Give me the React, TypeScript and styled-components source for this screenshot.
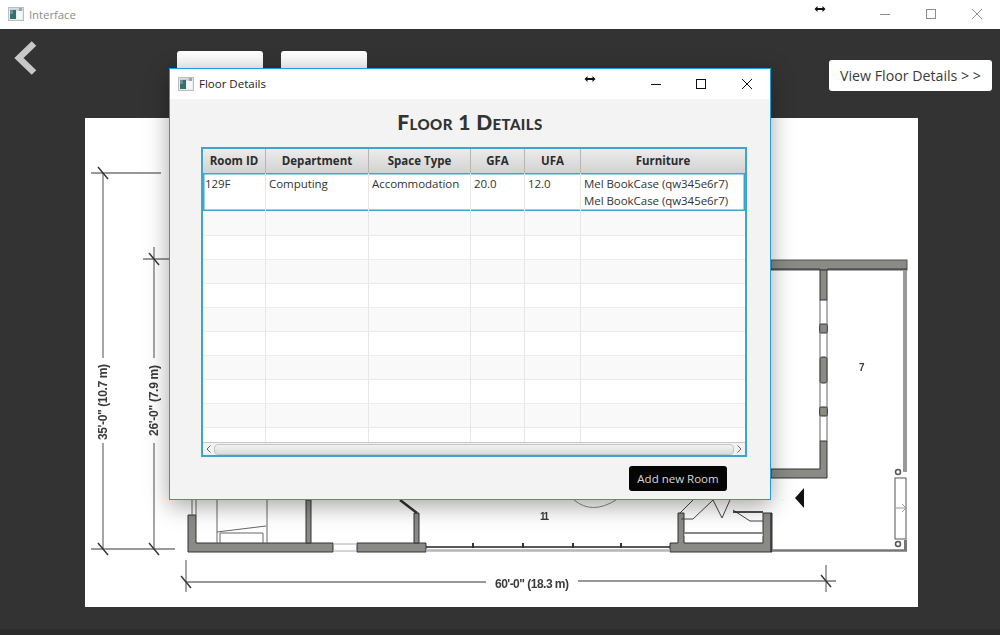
import * as React from "react";
import styled, { createGlobalStyle } from "styled-components";

const UI_FONT = `"Open Sans", "Noto Sans", "Liberation Sans", sans-serif`;
const COLUMNS = "63px 103px 102px 54px 56px 1fr";
const EMPTY_ROWS = 10;

const GlobalStyle = createGlobalStyle`
  html, body {
    margin: 0;
    padding: 0;
    background: #333;
  }
  body {
    font-family: ${UI_FONT};
  }
`;

const Page = styled.div`
  position: relative;
  width: 1000px;
  height: 635px;
  overflow: hidden;
  display: flex;
  flex-direction: column;
  background: #333333;
`;

const TitleBar = styled.div`
  height: 29px;
  flex: none;
  display: flex;
  align-items: center;
  background: #fff;
  padding: 0 0 1px 8px;
  box-sizing: border-box;
  font-size: 11.5px;
  color: #8c8c8c;
`;

const AppName = styled.span`
  margin-left: 5px;
  letter-spacing: -0.1px;
`;

const WindowControls = styled.div`
  margin-left: auto;
  display: flex;
  align-items: center;
`;

const ControlButton = styled.div<{ $w: number }>`
  width: ${(p) => p.$w}px;
  display: flex;
  justify-content: center;
`;

const ResizeCursor = styled.svg<{ $right: number }>`
  position: absolute;
  right: ${(p) => p.$right}px;
  top: 5px;
`;

const TopRow = styled.div`
  height: 89px;
  flex: none;
  display: flex;
  align-items: flex-start;
  padding: 0 8px 0 14px;
`;

const BackArrow = styled.svg`
  margin-top: 12px;
  flex: none;
`;

const FloorButton = styled.div`
  width: 86px;
  height: 31px;
  margin: 22px 18px 0 0;
  border-radius: 3px;
  background: linear-gradient(#ffffff, #ededed);
  &:first-of-type {
    margin-left: 140px;
  }
`;

const ViewButton = styled.button`
  margin: 31px 0 0 auto;
  width: 163px;
  height: 31px;
  border: 0;
  border-radius: 3px;
  background: #fff;
  color: #3a3a3a;
  font-family: ${UI_FONT};
  font-size: 14.2px;
  padding: 0;
  white-space: nowrap;
`;

const PlanSheet = styled.div`
  width: 833px;
  height: 489px;
  margin-left: 85px;
  flex: none;
  background: #fff;
  overflow: hidden;
  svg {
    filter: blur(0.55px);
  }
`;

const Footer = styled.div`
  flex: 1;
  border-bottom: 6px solid #2b2b2b;
`;

const Dialog = styled.div`
  position: absolute;
  left: 169px;
  top: 68px;
  width: 602px;
  height: 432px;
  box-sizing: border-box;
  border: 1px solid #1f9bd6;
  background: #f3f3f3;
  box-shadow: 0 6px 22px rgba(0, 0, 0, 0.35);
  display: flex;
  flex-direction: column;
`;

const DialogBar = styled.div`
  height: 30px;
  flex: none;
  display: flex;
  align-items: center;
  background: #fff;
  padding: 0 0 1px 8px;
  box-sizing: border-box;
  font-size: 11.5px;
  color: #222;
`;

const DialogName = styled.span`
  margin-left: 5px;
`;

const Heading = styled.h1`
  margin: 6px 0 0;
  height: 42px;
  line-height: 34px;
  text-align: center;
  font-family: Lato, "Liberation Sans", sans-serif;
  font-size: 21px;
  font-weight: 900;
  font-variant: small-caps;
  letter-spacing: 0.4px;
  color: #333;
`;

const TableFrame = styled.div`
  width: 546px;
  height: 310px;
  margin-left: 31px;
  box-sizing: border-box;
  border: 2px solid #3ba7cf;
  background: #fff;
  display: flex;
  flex-direction: column;
  flex: none;
  overflow: hidden;
`;

const HeaderRow = styled.div`
  display: grid;
  grid-template-columns: ${COLUMNS};
  height: 24px;
  flex: none;
  background: linear-gradient(#ececec, #d2d2d2);
`;

const HeaderCell = styled.div`
  border-right: 1px solid #b5b5b5;
  box-sizing: border-box;
  text-align: center;
  line-height: 23px;
  font-size: 11.5px;
  font-weight: 700;
  color: #2c2c2c;
  white-space: nowrap;
  &:last-child {
    border-right: 0;
  }
`;

const Rows = styled.div`
  flex: 1;
  min-height: 0;
  overflow: hidden;
`;

const Row = styled.div<{ $selected?: boolean; $odd?: boolean }>`
  display: grid;
  grid-template-columns: ${COLUMNS};
  height: ${(p) => (p.$selected ? 38 : 24)}px;
  margin-bottom: ${(p) => (p.$selected ? 1 : 0)}px;
  box-sizing: border-box;
  background: ${(p) => (p.$odd ? "#f9f9f9" : "#fff")};
  border-bottom: ${(p) => (p.$selected ? "0" : "1px solid #ececec")};
  box-shadow: ${(p) => (p.$selected ? "inset 0 0 0 1.5px #3ba7cf" : "none")};
`;

const Cell = styled.div`
  border-right: 1px solid #e6e6e6;
  box-sizing: border-box;
  padding: 2px 0 0 3px;
  font-size: 11.5px;
  letter-spacing: -0.05px;
  line-height: 17px;
  color: #333;
  white-space: nowrap;
  &:first-child {
    padding-left: 2px;
  }
  &:last-child {
    border-right: 0;
  }
`;

const ScrollBar = styled.div`
  height: 12px;
  flex: none;
  display: flex;
  align-items: center;
  background: #f2f2f2;
  border-top: 1px solid #c8c8c8;
`;

const ScrollTrack = styled.div`
  flex: 1;
  height: 9px;
  border: 1px solid #c4c4c4;
  border-radius: 4px;
  background: linear-gradient(#f2f2f2, #dcdcdc);
`;

const ScrollArrow = styled.svg`
  flex: none;
  margin: 0 3px;
`;

const DialogFooter = styled.div`
  display: flex;
  justify-content: flex-end;
  padding: 9px 43px 0 0;
`;

const AddButton = styled.button`
  width: 98px;
  height: 25px;
  padding: 0;
  border: 0;
  border-radius: 3px;
  background: #050505;
  color: #d8d8d8;
  font-family: ${UI_FONT};
  font-size: 11.5px;
`;

const AppIcon = () => (
  <svg width="16" height="16" viewBox="0 0 16 16">
    <rect x="0.5" y="1.5" width="15" height="13" fill="#e9eeee" stroke="#b9bdbd" />
    <rect x="1.5" y="2.5" width="13" height="2" fill="#c7d0d2" />
    <rect x="2" y="4" width="6" height="9" fill="#33706f" />
    <rect x="2" y="4" width="3" height="4" fill="#6c8fa0" />
    <rect x="9" y="5" width="5" height="8" fill="#f6f6f6" />
    <rect x="11" y="2" width="3" height="3" fill="#9aa7aa" />
  </svg>
);

const Cursor = ({ right, top }: { right: number; top?: number }) => (
  <ResizeCursor $right={right} width="12" height="8" viewBox="0 0 12 8" style={top ? { top } : undefined}>
    <path d="M0.5 4 L3.5 1 V3 H8.5 V1 L11.5 4 L8.5 7 V5 H3.5 V7 Z" fill="#111" />
  </ResizeCursor>
);

const Controls = ({ color, widths }: { color: string; widths: number[] }) => (
  <WindowControls>
    <ControlButton $w={widths[0]}>
      <svg width="12" height="12" viewBox="0 0 12 12">
        <path d="M1 6.5 H11" stroke={color} strokeWidth="1" />
      </svg>
    </ControlButton>
    <ControlButton $w={widths[1]}>
      <svg width="12" height="12" viewBox="0 0 12 12">
        <rect x="1.5" y="1.5" width="9" height="9" fill="none" stroke={color} />
      </svg>
    </ControlButton>
    <ControlButton $w={widths[2]}>
      <svg width="12" height="12" viewBox="0 0 12 12">
        <path d="M1 1 L11 11 M11 1 L1 11" stroke={color} strokeWidth="1" fill="none" />
      </svg>
    </ControlButton>
  </WindowControls>
);

const Tick = ({ x, y }: { x: number; y: number }) => (
  <path d={`M${x - 5} ${y - 6} L${x + 5} ${y + 6}`} stroke="#333" strokeWidth="1.4" />
);

const FloorPlan = () => {
  const wall = "#8a8a86";
  const edge = "#333";
  const dim = "#777";
  return (
    <svg width="833" height="489" viewBox="85 118 833 489">
      {/* dimensions, left */}
      <g stroke={dim} strokeWidth="1.3" fill="none">
        <path d="M91 173 H161 M103 173 V358 M103 443 V549" />
        <path d="M143 259 H170 M154 247 V358 M154 443 V549" />
        <path d="M91 549 H175" />
        <path d="M186 560 V592 M186 582 H486 M578 581 H836 M826 565 V592" />
      </g>
      <Tick x={103} y={173} />
      <Tick x={154} y={259} />
      <Tick x={103} y={549} />
      <Tick x={154} y={549} />
      <Tick x={186} y={582} />
      <Tick x={826} y={581} />
      <g fill="#3a3a3a" fontFamily="Liberation Sans Narrow, Liberation Sans, sans-serif" fontSize="12" fontWeight="700">
        <text transform="translate(107 440) rotate(-90)" textLength="76">35'-0" (10.7 m)</text>
        <text transform="translate(158 436) rotate(-90)" textLength="71">26'-0" (7.9 m)</text>
        <text x="495" y="588" textLength="74">60'-0" (18.3 m)</text>
        <text x="540" y="520" fontSize="10" letterSpacing="-1.5">11</text>
        <text x="859" y="371" fontSize="10">7</text>
      </g>

      {/* bottom walls */}
      <g fill={wall} stroke={edge} strokeWidth="1">
        <path d="M188 515 H196 V543 H333 V552 H188 Z" />
        <path d="M306 500 H311 V543 H306 Z" />
        <path d="M357 543 H426 V552 H357 Z" />
        <path d="M414 513 H419 V543 H414 Z" />
        <path d="M670 543 H678 V513 H684 V543 H763 V513 H772 V552 H670 Z" />
      </g>
      <g stroke="#666" fill="none" strokeWidth="1">
        <path d="M192 500 V515 M196 500 V515" />
        <path d="M217 500 V543 M267 500 V543 M217 532 L266 526 M220 543 V533 H263 V543" />
        <path d="M333 544 H357 M333 551 H357" stroke="#aaa" />
        <path d="M574 500 Q592 515 616 500" stroke="#888" />
      </g>
      <path d="M400 500 L417 513" stroke={edge} strokeWidth="2.5" />
      <path d="M426 547 H670" stroke="#222" strokeWidth="1.5" />
      <path d="M426 550.5 H670" stroke="#b5b5b5" strokeWidth="2.5" />
      <path d="M473 543 V548 M523 543 V548 M573 543 V548 M621 543 V548" stroke="#333" strokeWidth="2" />

      {/* stairs */}
      <g stroke="#444" strokeWidth="1" fill="none">
        <path d="M680 513 L693 500 M681 519 H693 L713 500 L722 518 L730 500" />
        <path d="M733 510 L750 521 H763" />
        <path d="M733 512 H763" strokeWidth="1.6" stroke="#222" />
        <path d="M684 533 H763" stroke="#888" strokeWidth="2" />
        <path d="M684 535 H763" stroke="#fff" strokeDasharray="10 5" />
      </g>
      <path d="M771 513 V552" stroke="#333" strokeWidth="1.5" />

      {/* right wing */}
      <rect x="771" y="260" width="136" height="10" fill={wall} stroke="#555" strokeWidth="1" />
      <path d="M771 269 H820 M827 269 H907" stroke={edge} strokeWidth="1" />
      <path d="M903 270 H907 V472 H903 Z" fill="#9a9a98" />
      <g fill={wall} stroke={edge} strokeWidth="1">
        <rect x="820" y="270" width="7" height="30" />
        <rect x="819.5" y="324" width="8" height="9" rx="1.5" />
        <rect x="820" y="357" width="7" height="26" rx="2" />
        <rect x="819.5" y="407" width="8" height="9" rx="1.5" />
        <path d="M820 441 H827 V478 H771 V469 H820 Z" />
      </g>
      <path d="M820 300 V441 M827 300 V441" stroke="#666" strokeWidth="1" />
      <path d="M795 498 L804 488 V508 Z" fill="#111" />
      <g fill="none" stroke="#555" strokeWidth="1">
        <rect x="895" y="478" width="11" height="61" />
        <circle cx="898" cy="472" r="2.5" strokeWidth="1.5" />
        <circle cx="898" cy="544" r="2.5" strokeWidth="1.5" />
        <path d="M896 508 H906 M902 504 L906 508 L902 512" stroke="#999" />
      </g>
      <path d="M772 550.5 H907" stroke="#777" strokeWidth="2.5" />
      <path d="M905.5 540 V550" stroke="#777" strokeWidth="3" />
    </svg>
  );
};

const HEADERS = ["Room ID", "Department", "Space Type", "GFA", "UFA", "Furniture"];

export default function App() {
  return (
    <Page>
      <GlobalStyle />
      <TitleBar>
        <AppIcon />
        <AppName>Interface</AppName>
        <Controls color="#8e8e8e" widths={[46, 46, 46]} />
      </TitleBar>
      <Cursor right={174} />
      <TopRow>
        <BackArrow width="23" height="34" viewBox="0 0 23 34">
          <path d="M20 2.5 L5 17 L20 31.5" fill="none" stroke="#c8c8c8" strokeWidth="6.5" />
        </BackArrow>
        <FloorButton />
        <FloorButton />
        <ViewButton>{"View Floor Details > >"}</ViewButton>
      </TopRow>
      <PlanSheet>
        <FloorPlan />
      </PlanSheet>
      <Footer />
      <Dialog>
        <DialogBar>
          <AppIcon />
          <DialogName>Floor Details</DialogName>
          <Controls color="#111" widths={[45, 45, 47]} />
        </DialogBar>
        <Heading>Floor 1 Details</Heading>
        <TableFrame>
          <HeaderRow>
            {HEADERS.map((h) => (
              <HeaderCell key={h}>{h}</HeaderCell>
            ))}
          </HeaderRow>
          <Rows>
            <Row $selected>
              <Cell>129F</Cell>
              <Cell>Computing</Cell>
              <Cell>Accommodation</Cell>
              <Cell>20.0</Cell>
              <Cell>12.0</Cell>
              <Cell>
                Mel BookCase (qw345e6r7)
                <br />
                Mel BookCase (qw345e6r7)
              </Cell>
            </Row>
            {Array.from({ length: EMPTY_ROWS }, (_, i) => (
              <Row key={i} $odd={i % 2 === 0}>
                {HEADERS.map((h) => (
                  <Cell key={h} />
                ))}
              </Row>
            ))}
          </Rows>
          <ScrollBar>
            <ScrollArrow width="5" height="8" viewBox="0 0 5 8">
              <path d="M4.5 0.5 L1 4 L4.5 7.5" fill="none" stroke="#666" />
            </ScrollArrow>
            <ScrollTrack />
            <ScrollArrow width="5" height="8" viewBox="0 0 5 8">
              <path d="M0.5 0.5 L4 4 L0.5 7.5" fill="none" stroke="#666" />
            </ScrollArrow>
          </ScrollBar>
        </TableFrame>
        <DialogFooter>
          <AddButton>Add new Room</AddButton>
        </DialogFooter>
      </Dialog>
      <Cursor right={404} top={75} />
    </Page>
  );
}
